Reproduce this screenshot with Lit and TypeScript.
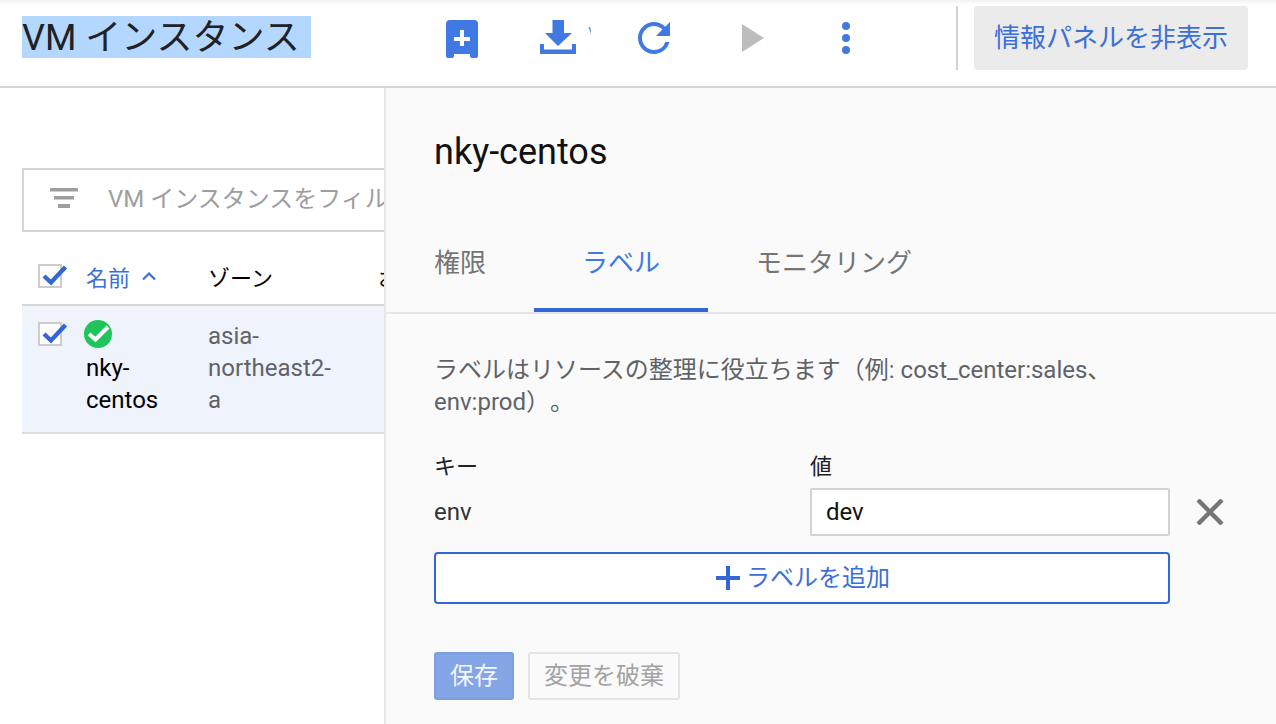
import { LitElement, html, css } from "lit";
import { customElement } from "lit/decorators.js";

const checkbox = html`<span class="cb"><svg viewBox="0 0 30 26" width="30" height="26"><path d="M6 14 L13 20.5 L27.5 5" fill="none" stroke="#3367d6" stroke-width="4.4"/></svg></span>`;

@customElement("app-root")
export class AppRoot extends LitElement {
  static styles = css`
    :host { display: block; width: 1276px; height: 724px; overflow: hidden; background: #fff;
      font-family: Roboto, "Noto Sans CJK JP", sans-serif; font-size: 24px; color: #000; text-spacing-trim: space-all; }
    .top { height: 86px; border-bottom: 2px solid #d6d6d6; display: flex; align-items: flex-start; background: linear-gradient(#f2f2f2, #fff 5px); }
    .title-wrap { width: 424px; padding: 16px 0 0 22px; flex: none; }
    .title { display: inline-block; font-size: 36px; line-height: 44px; height: 42px; width: 289px; white-space: nowrap; background: #b3d7ff; color: #202124; }
    .tools { display: flex; align-items: flex-start; }
    svg { display: block; flex: none; }
    .ic-add { margin: 20px 0 0 0; }
    .ic-dl { margin: 20px 0 0 62px; }
    .clip { width: 3px; height: 7px; margin: 27px 0 0 12px; overflow: hidden; color: #4079e3; font-size: 12px; line-height: 8px; }
    .ic-ref { margin: 14px 0 0 39px; }
    .ic-play { margin: 24px 0 0 64px; }
    .ic-more { margin: 22px 0 0 78px; }
    .divider { width: 2px; height: 64px; background: #d2d2d2; margin: 6px 0 0 106px; flex: none; }
    .hide { width: 274px; height: 64px; padding-bottom: 6px; box-sizing: border-box; margin: 6px 0 0 16px; border-radius: 4px; background: #ebebeb; color: #3b6fd9; font-size: 26px; display: flex; align-items: center; justify-content: center; white-space: nowrap; flex: none; }
    .body { display: flex; height: 636px; }
    .left { width: 384px; flex: none; overflow: hidden; padding-top: 80px; box-sizing: border-box; }
    .inner { width: 700px; margin-left: 22px; }
    .filter { height: 64px; box-sizing: border-box; border: 2px solid #d4d4d4; display: flex; align-items: center; padding-left: 26px; color: #9e9e9e; white-space: nowrap; }
    .filter svg { margin: 0 30px 4px 0; }
    .filter span { padding-bottom: 8px; }
    .thead { height: 56px; padding-top: 16px; border-bottom: 2px solid #d6d6d6; display: flex; align-items: center; font-size: 22px; }
    .cb { width: 24px; height: 24px; box-sizing: border-box; border: 2px solid #cccccc; background: #fff; position: relative; display: block; flex: none; margin-left: 16px; }
    .cb svg { position: absolute; left: -2px; top: -4px; }
    .th-name { margin-left: 24px; width: 122px; color: #3b6fd9; display: flex; align-items: center; flex: none; }
    .th-name svg { margin-left: 12px; }
    .th-zone { width: 170px; flex: none; }
    .row { height: 126px; background: #eff3fb; border-bottom: 2px solid #dcdee2; display: flex; align-items: flex-start; line-height: 32px; }
    .row .cb { margin-top: 16px; }
    .name { width: 122px; margin-left: 24px; flex: none; margin-top: 14px; }
    .status { margin: 0 0 4px -2px; }
    .zone { width: 130px; flex: none; color: #5f6368; padding-top: 14px; }
    .panel { flex: 1; min-width: 0; background: #fafafa; border-left: 2px solid #e8e8e8; }
    .name-head { font-size: 36px; line-height: 42px; padding: 43px 0 0 48px; height: 84px; color: #111; }
    .tabs { height: 97px; display: flex; align-items: stretch; border-bottom: 2px solid #e6e6e6; font-size: 26px; color: #757575; }
    .tab { display: flex; align-items: center; box-sizing: border-box; height: 97px; padding-bottom: 6px; }
    .tab.first { margin-left: 48px; width: 100px; }
    .tab.active { width: 174px; justify-content: center; color: #4079e3; border-bottom: 4px solid #3367d6; padding-bottom: 2px; }
    .tab.last { margin-left: 48px; }
    .content { padding: 40px 48px 0 48px; }
    .desc { color: #5f6368; line-height: 32px; width: 680px; }
    .grid { display: grid; grid-template-columns: 376px 360px 54px; margin-top: 28px; }
    .lbl { line-height: 32px; height: 37px; padding-top: 5px; color: #202124; font-size: 22px; }
    .key { display: flex; align-items: center; height: 48px; color: #333; }
    .input { height: 48px; box-sizing: border-box; border: 2px solid #d2d2d2; background: #fff; border-radius: 2px; padding-left: 14px; display: flex; align-items: center; color: #111; }
    .del { display: flex; align-items: center; justify-content: flex-end; }
    .add { margin-top: 16px; width: 736px; height: 52px; box-sizing: border-box; border: 2px solid #3367d6; border-radius: 4px; background: #fff; color: #3b6fd9; display: flex; align-items: center; justify-content: center; padding: 0 0 0 2px; }
    .add svg { margin-right: 6px; }
    .add span { padding-bottom: 6px; }
    .btns { display: flex; margin-top: 48px; gap: 14px; }
    .btn { height: 48px; box-sizing: border-box; border-radius: 3px; display: flex; align-items: center; justify-content: center; padding-bottom: 6px; }
    .save { width: 80px; background: #85a6e6; color: #f4f7fd; border: 2px solid #7d9fe2; }
    .discard { width: 152px; border: 2px solid #e4e4e4; color: #a3a3a3; }
  `;

  render() {
    return html`
      <div class="top">
        <div class="title-wrap"><div class="title">VM インスタンス</div></div>
        <div class="tools">
          <svg class="ic-add" width="32" height="38" viewBox="0 0 32 38">
            <path fill="#4079e3" fill-rule="evenodd" d="M4 0H28A4 4 0 0 1 32 4V36A2 2 0 0 1 30 38H26A2 2 0 0 1 24 36V34H8V36A2 2 0 0 1 6 38H2A2 2 0 0 1 0 36V4A4 4 0 0 1 4 0ZM14 10V17H8V21H14V26H18V21H24V17H18V10Z"/>
          </svg>
          <svg class="ic-dl" width="36" height="34" viewBox="0 0 36 34">
            <path fill="#4079e3" d="M12.5 0H24V13H32L18 26L5 13H12.5ZM0 24H4V29.5H32V24H36V34H0Z"/>
          </svg>
          <div class="clip">V</div>
          <svg class="ic-ref" width="48" height="48" viewBox="0 0 24 24">
            <path fill="#4079e3" d="M17.65 6.35A7.958 7.958 0 0 0 12 4c-4.42 0-7.99 3.58-7.99 8s3.57 8 7.99 8c3.73 0 6.84-2.55 7.73-6h-2.08A5.99 5.99 0 0 1 12 18c-3.31 0-6-2.69-6-6s2.69-6 6-6c1.66 0 3.14.69 4.22 1.78L13 11h7V4l-2.35 2.35z"/>
          </svg>
          <svg class="ic-play" width="22" height="28" viewBox="0 0 22 28"><path fill="#bdbdbd" d="M0 0L22 14L0 28Z"/></svg>
          <svg class="ic-more" width="8" height="32" viewBox="0 0 8 32">
            <circle cx="4" cy="4" r="4" fill="#4079e3"/><circle cx="4" cy="16" r="4" fill="#4079e3"/><circle cx="4" cy="28" r="4" fill="#4079e3"/>
          </svg>
          <div class="divider"></div>
          <div class="hide">情報パネルを非表示</div>
        </div>
      </div>
      <div class="body">
        <div class="left">
          <div class="inner">
            <div class="filter">
              <svg width="28" height="20" viewBox="0 0 28 20"><path fill="#9e9e9e" d="M0 0H28V3.5H0ZM4 8H24V11.5H4ZM8 16H20V20H8Z"/></svg>
              <span>VM インスタンスをフィルタ</span>
            </div>
            <div class="thead">
              ${checkbox}
              <div class="th-name">名前
                <svg width="14" height="10" viewBox="0 0 14 10"><path d="M1 8.5L7 2.5L13 8.5" fill="none" stroke="#3b6fd9" stroke-width="2.2"/></svg>
              </div>
              <div class="th-zone">ゾーン</div>
              <div>おすすめ</div>
            </div>
            <div class="row">
              ${checkbox}
              <div class="name">
                <svg class="status" width="28" height="28" viewBox="0 0 28 28">
                  <circle cx="14" cy="14" r="14" fill="#1fc45a"/>
                  <path d="M5 14L11.5 19.5L24 7" fill="none" stroke="#fff" stroke-width="4"/>
                </svg>
                nky-<br />centos
              </div>
              <div class="zone">asia-<br />northeast2-<br />a</div>
            </div>
          </div>
        </div>
        <div class="panel">
          <div class="name-head">nky-centos</div>
          <div class="tabs">
            <div class="tab first">権限</div>
            <div class="tab active">ラベル</div>
            <div class="tab last">モニタリング</div>
          </div>
          <div class="content">
            <div class="desc">ラベルはリソースの整理に役立ちます（例: cost_center:sales、env:prod）。</div>
            <div class="grid">
              <div class="lbl">キー</div>
              <div class="lbl">値</div>
              <div></div>
              <div class="key">env</div>
              <div class="input">dev</div>
              <div class="del">
                <svg width="28" height="26" viewBox="0 0 28 26"><path d="M2 1L26 25M26 1L2 25" stroke="#757575" stroke-width="4.4" fill="none"/></svg>
              </div>
            </div>
            <div class="add">
              <svg width="24" height="24" viewBox="0 0 24 24"><path fill="#3367d6" d="M10 0H14V10H24V14H14V24H10V14H0V10H10Z"/></svg>
              <span>ラベルを追加</span>
            </div>
            <div class="btns">
              <div class="btn save">保存</div>
              <div class="btn discard">変更を破棄</div>
            </div>
          </div>
        </div>
      </div>
    `;
  }
}
